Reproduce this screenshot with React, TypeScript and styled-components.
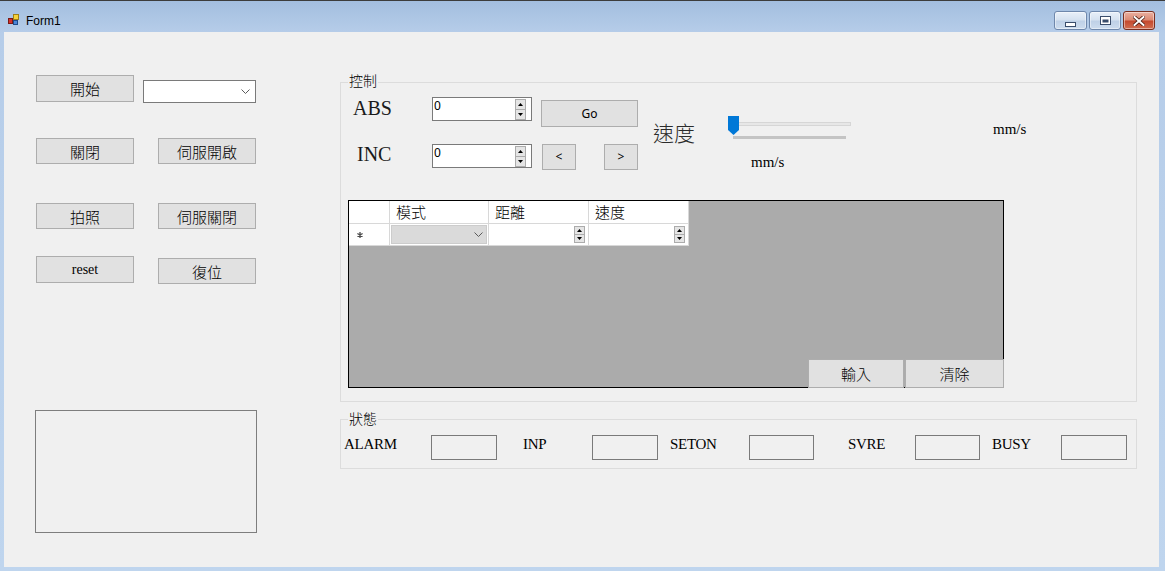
import React from "react";
import styled, { createGlobalStyle } from "styled-components";

const CJK = `"Noto Sans CJK TC", "Noto Sans CJK SC", sans-serif`;
const SERIF = `"Liberation Serif", "Noto Sans CJK TC", serif`;
const SANS = `"Noto Sans", "Liberation Sans", sans-serif`;

const GlobalStyle = createGlobalStyle`
  html, body { margin: 0; padding: 0; background: #bcd3ec; }
  body { width: 1165px; height: 571px; overflow: hidden; }
  *, *::before, *::after { box-sizing: border-box; }
`;

const Window = styled.div`
  width: 1165px;
  height: 571px;
  display: flex;
  flex-direction: column;
  background: linear-gradient(180deg, #a3bedf 0px, #b6cde9 32px, #bfd5ee 100%);
  border-top: 1px solid #3c3c3c;
  overflow: hidden;
`;

const TitleBar = styled.div`
  height: 31px;
  display: flex;
  align-items: flex-start;
  padding: 0 10px 0 8px;
`;

const AppIcon = styled.svg`
  margin-top: 12px;
  flex: none;
`;

const Caption = styled.div`
  margin: 12px 0 0 7px;
  font-family: "Segoe UI", "Liberation Sans", sans-serif;
  font-size: 12px;
  line-height: 16px;
  color: #000;
`;

const CaptionButtons = styled.div`
  margin: 10px 0 0 auto;
  display: flex;
  gap: 2px;
`;

const CaptionButton = styled.div<{ $close?: boolean; $w: number }>`
  width: ${(p) => p.$w}px;
  height: 19px;
  border-radius: 3px;
  border: 1px solid ${(p) => (p.$close ? "#7a2e1f" : "#6e87ab")};
  background: ${(p) =>
    p.$close
      ? "linear-gradient(180deg, #eab0a1 0%, #dc8b75 45%, #c54a2f 55%, #d06e52 100%)"
      : "linear-gradient(180deg, #e9f0f9 0%, #d6e2f0 45%, #bfd1e7 55%, #cddcee 100%)"};
  box-shadow: inset 0 0 0 1px rgba(255, 255, 255, 0.45);
  display: flex;
  align-items: center;
  justify-content: center;
`;

const Client = styled.div`
  margin: 0 6px 4px 4px;
  height: 535px;
  background: #f0f0f0;
  display: flex;
`;

const LeftPanel = styled.div`
  width: 253px;
  flex: none;
  padding: 43px 0 0 32px;
  display: flex;
  flex-direction: column;
`;

const ButtonRow = styled.div<{ $mt: number }>`
  display: flex;
  align-items: flex-start;
  margin-top: ${(p) => p.$mt}px;
`;

const WinButton = styled.button<{ $w: number; $h?: number; $ml?: number; $mt?: number; $kind?: "cjk" | "serif" | "sans" }>`
  width: ${(p) => p.$w}px;
  height: ${(p) => p.$h ?? 26}px;
  margin: ${(p) => p.$mt ?? 0}px 0 0 ${(p) => p.$ml ?? 0}px;
  padding: 0;
  flex: none;
  background: #e1e1e1;
  border: 1px solid #adadad;
  border-radius: 0;
  color: #000;
  font-family: ${(p) => (p.$kind === "serif" ? SERIF : p.$kind === "sans" ? SANS : CJK)};
  font-size: ${(p) => (p.$kind === "serif" ? "14px" : p.$kind === "sans" ? "12px" : "15px")};
  font-weight: ${(p) => (p.$kind === "serif" || p.$kind === "sans" ? 400 : 300)};
  line-height: 1;
  display: flex;
  align-items: center;
  justify-content: center;
`;

const Combo = styled.div<{ $w: number; $ml: number; $mt: number }>`
  width: ${(p) => p.$w}px;
  height: 23px;
  margin: ${(p) => p.$mt}px 0 0 ${(p) => p.$ml}px;
  background: #fff;
  border: 1px solid #7a7a7a;
  display: flex;
  align-items: center;
  justify-content: flex-end;
  padding-right: 5px;
`;

const PictureBox = styled.div`
  width: 222px;
  height: 123px;
  margin: 126px 0 0 -1px;
  border: 1px solid #7e7e7e;
`;

const RightPanel = styled.div`
  width: 797px;
  margin-left: 83px;
  padding-top: 50px;
  display: flex;
  flex-direction: column;
`;

const GroupBox = styled.div<{ $mt?: number }>`
  border: 1px solid #dcdcdc;
  margin-top: ${(p) => p.$mt ?? 0}px;
  display: flex;
  flex-direction: column;
`;

const Legend = styled.div<{ $mt: number }>`
  align-self: flex-start;
  margin: ${(p) => p.$mt}px 0 0 7px;
  padding: 0 1px;
  height: 16px;
  background: #f0f0f0;
  font-family: ${CJK};
  font-size: 14px;
  font-weight: 300;
  line-height: 16px;
  color: #000;
`;

const ControlBody = styled.div`
  display: flex;
  flex-direction: column;
  padding-bottom: 13px;
`;

const TopSection = styled.div`
  margin-top: 9px;
  display: grid;
  grid-template-columns: 91px 109px 112px 75px 265px auto;
  grid-template-rows: 47px 26px;
  align-items: start;
`;

const BigLabel = styled.div<{ $pl: number; $row: number; $lh: number }>`
  grid-column: 1;
  grid-row: ${(p) => p.$row};
  padding-left: ${(p) => p.$pl}px;
  font-family: ${SERIF};
  font-size: 20px;
  line-height: ${(p) => p.$lh}px;
  color: #1a1a1a;
`;

const Numeric = styled.div<{ $row: number }>`
  grid-column: 2;
  grid-row: ${(p) => p.$row};
  width: 100px;
  height: 24px;
  background: #fff;
  border: 1px solid #7a7a7a;
  display: flex;
  justify-content: space-between;
  padding: 0 5px 0 1px;
  font-family: ${SANS};
  font-size: 12px;
  line-height: 16px;
  color: #000;
`;

const SpinStack = styled.div<{ $h: number }>`
  display: flex;
  flex-direction: column;
  align-self: center;
  height: ${(p) => p.$h}px;
`;

const SpinButton = styled.div`
  flex: 1;
  width: 11px;
  background: #e5e5e5;
  border: 1px solid #acacac;
  display: flex;
  align-items: center;
  justify-content: center;
  & + & { border-top: none; }
`;

const CellA = styled.div<{ $row: number; $col: number; $mt?: number; $span?: number }>`
  grid-column: ${(p) => p.$col};
  grid-row: ${(p) => p.$row} / span ${(p) => p.$span ?? 1};
  margin-top: ${(p) => p.$mt ?? 0}px;
  display: flex;
  align-items: flex-start;
`;

const SpeedLabel = styled.div`
  font-family: ${CJK};
  font-size: 21px;
  font-weight: 300;
  line-height: 26px;
  color: #2b2b2b;
`;

const SmallSerif = styled.div<{ $pl?: number }>`
  padding-left: ${(p) => p.$pl ?? 0}px;
  font-family: ${SERIF};
  font-size: 15px;
  line-height: 18px;
  color: #000;
`;

const Slider = styled.div`
  position: relative;
  width: 124px;
  height: 24px;
  display: flex;
  flex-direction: column;
  padding-left: 5px;
`;

const SliderTrack = styled.div`
  margin-top: 6px;
  width: 118px;
  height: 4px;
  background: #e7e7e7;
  border: 1px solid #d6d6d6;
`;

const SliderTicks = styled.div`
  margin-top: 10px;
  width: 113px;
  height: 3px;
  background: #c4c4c4;
`;

const Thumb = styled.svg`
  position: absolute;
  left: 0;
  top: 0;
`;

const DataGrid = styled.div`
  position: relative;
  margin: 30px 0 0 7px;
  width: 656px;
  height: 188px;
  border: 1px solid #000;
  background: #ababab;
`;

const GridTable = styled.div`
  display: grid;
  grid-template-columns: 41px 99px 100px 100px;
  grid-template-rows: 23px 22px;
  width: max-content;
`;

const HeaderCell = styled.div`
  background: #fff;
  border-right: 1px solid #d8d8d8;
  border-bottom: 1px solid #d8d8d8;
  padding-left: 6px;
  font-family: ${CJK};
  font-size: 15px;
  font-weight: 300;
  line-height: 21px;
  color: #000;
`;

const RowHeaderCell = styled.div`
  background: #fff;
  border-right: 1px solid #d8d8d8;
  border-bottom: 1px solid #d8d8d8;
  display: flex;
  align-items: center;
  padding-left: 8px;
`;

const ComboCell = styled.div`
  background: #fff;
  border-right: 1px solid #d8d8d8;
  border-bottom: 1px solid #d8d8d8;
  padding: 1px;
  display: flex;
`;

const ComboCellInner = styled.div`
  flex: 1;
  background: #dadada;
  border: 1px solid #cccccc;
  display: flex;
  align-items: center;
  justify-content: flex-end;
  padding-right: 3px;
`;

const NumCell = styled.div`
  background: #fff;
  border-right: 1px solid #d8d8d8;
  border-bottom: 1px solid #d8d8d8;
  display: flex;
  justify-content: flex-end;
  align-items: center;
  padding-right: 3px;
`;

const GridButtons = styled.div`
  position: absolute;
  right: -1px;
  bottom: -1px;
  display: flex;
  gap: 1px;
`;

const StatusRow = styled.div`
  margin-top: 9px;
  padding: 0 0 8px 3px;
  display: flex;
  align-items: flex-start;
`;

const StatusLabel = styled.div<{ $w: number; $ml: number }>`
  width: ${(p) => p.$w}px;
  margin-left: ${(p) => p.$ml}px;
  flex: none;
  font-family: ${SERIF};
  font-size: 15px;
  letter-spacing: -0.3px;
  line-height: 18px;
  color: #000;
`;

const StatusBox = styled.div<{ $w: number }>`
  width: ${(p) => p.$w}px;
  height: 25px;
  flex: none;
  border: 1px solid #7a7a7a;
  background: #f0f0f0;
`;

const Chevron = () => (
  <svg width="9" height="5" viewBox="0 0 9 5">
    <polyline points="0.5,0.5 4.5,4.5 8.5,0.5" fill="none" stroke="#5a5a5a" strokeWidth="1" />
  </svg>
);

const Tri = ({ up }: { up?: boolean }) => (
  <svg width="5" height="3" viewBox="0 0 5 3">
    <polygon points={up ? "2.5,0 5,3 0,3" : "0,0 5,0 2.5,3"} fill="#000" />
  </svg>
);

const Spin = ({ h }: { h: number }) => (
  <SpinStack $h={h}>
    <SpinButton>
      <Tri up />
    </SpinButton>
    <SpinButton>
      <Tri />
    </SpinButton>
  </SpinStack>
);

const status = [
  { label: "ALARM", w: 87, ml: 0, box: 66 },
  { label: "INP", w: 69, ml: 26, box: 66 },
  { label: "SETON", w: 79, ml: 12, box: 65 },
  { label: "SVRE", w: 67, ml: 34, box: 65 },
  { label: "BUSY", w: 69, ml: 12, box: 66 },
];

export default function App() {
  return (
    <>
      <GlobalStyle />
      <Window>
        <TitleBar>
          <AppIcon width="11" height="13" viewBox="0 0 11 13">
            <rect x="0.5" y="5.5" width="4" height="5" fill="#d8302a" stroke="#7a1a14" />
            <rect x="5.5" y="1.5" width="5" height="5" fill="#f5d23c" stroke="#a08016" />
            <rect x="5.5" y="7.5" width="4" height="4" fill="#4a86d8" stroke="#1d4a8a" />
          </AppIcon>
          <Caption>Form1</Caption>
          <CaptionButtons>
            <CaptionButton $w={33}>
              <svg width="11" height="5" viewBox="0 0 11 5" style={{ marginTop: 8 }}>
                <rect x="0.5" y="0.5" width="10" height="4" fill="#fff" stroke="#3a4d6b" />
              </svg>
            </CaptionButton>
            <CaptionButton $w={32}>
              <svg width="11" height="9" viewBox="0 0 11 9">
                <rect x="0.5" y="0.5" width="10" height="8" fill="#fff" stroke="#3a4d6b" />
                <rect x="2.5" y="3.5" width="6" height="3" fill="#3a4d6b" />
              </svg>
            </CaptionButton>
            <CaptionButton $w={32} $close>
              <svg width="12" height="10" viewBox="0 0 12 10">
                <path d="M1.5,1 L10.5,9 M10.5,1 L1.5,9" stroke="#4a1a10" strokeWidth="3.6" strokeLinecap="square" />
                <path d="M1.5,1 L10.5,9 M10.5,1 L1.5,9" stroke="#fff" strokeWidth="2" strokeLinecap="square" />
              </svg>
            </CaptionButton>
          </CaptionButtons>
        </TitleBar>

        <Client>
          <LeftPanel>
            <ButtonRow $mt={0}>
              <WinButton $w={98} $h={27}>開始</WinButton>
              <Combo $w={113} $ml={9} $mt={5}>
                <Chevron />
              </Combo>
            </ButtonRow>
            <ButtonRow $mt={35}>
              <WinButton $w={98}>關閉</WinButton>
              <WinButton $w={98} $ml={24}>伺服開啟</WinButton>
            </ButtonRow>
            <ButtonRow $mt={39}>
              <WinButton $w={98}>拍照</WinButton>
              <WinButton $w={98} $ml={24}>伺服關閉</WinButton>
            </ButtonRow>
            <ButtonRow $mt={27}>
              <WinButton $w={98} $h={27} $kind="serif">reset</WinButton>
              <WinButton $w={98} $ml={24} $mt={2}>復位</WinButton>
            </ButtonRow>
            <PictureBox />
          </LeftPanel>

          <RightPanel>
            <GroupBox>
              <Legend $mt={-11}>控制</Legend>
              <ControlBody>
                <TopSection>
                  <BigLabel $row={1} $pl={12} $lh={23}>ABS</BigLabel>
                  <BigLabel $row={2} $pl={16} $lh={20}>INC</BigLabel>
                  <Numeric $row={1}>
                    <span>0</span>
                    <Spin h={21} />
                  </Numeric>
                  <Numeric $row={2}>
                    <span>0</span>
                    <Spin h={21} />
                  </Numeric>
                  <CellA $row={1} $col={3} $mt={3}>
                    <WinButton $w={97} $h={27} $kind="sans">Go</WinButton>
                  </CellA>
                  <CellA $row={2} $col={3}>
                    <WinButton $w={34} $ml={1} $kind="sans">&lt;</WinButton>
                    <WinButton $w={34} $ml={28} $kind="sans">&gt;</WinButton>
                  </CellA>
                  <CellA $row={1} $col={4} $span={2} $mt={22}>
                    <SpeedLabel>速度</SpeedLabel>
                  </CellA>
                  <CellA $row={1} $col={5} $mt={19}>
                    <Slider>
                      <SliderTrack />
                      <SliderTicks />
                      <Thumb width="11" height="19" viewBox="0 0 11 19">
                        <path d="M0,0 H11 V14 L5.5,19 L0,14 Z" fill="#0078d7" />
                      </Thumb>
                    </Slider>
                  </CellA>
                  <CellA $row={2} $col={5} $mt={9}>
                    <SmallSerif $pl={23}>mm/s</SmallSerif>
                  </CellA>
                  <CellA $row={1} $col={6} $mt={23}>
                    <SmallSerif>mm/s</SmallSerif>
                  </CellA>
                </TopSection>

                <DataGrid>
                  <GridTable>
                    <HeaderCell />
                    <HeaderCell>模式</HeaderCell>
                    <HeaderCell>距離</HeaderCell>
                    <HeaderCell>速度</HeaderCell>
                    <RowHeaderCell>
                      <svg width="6" height="6" viewBox="0 0 6 6">
                        <path d="M3,0 V6 M0.4,1.5 L5.6,4.5 M5.6,1.5 L0.4,4.5" stroke="#4a4a4a" strokeWidth="1.3" />
                      </svg>
                    </RowHeaderCell>
                    <ComboCell>
                      <ComboCellInner>
                        <Chevron />
                      </ComboCellInner>
                    </ComboCell>
                    <NumCell>
                      <Spin h={17} />
                    </NumCell>
                    <NumCell>
                      <Spin h={17} />
                    </NumCell>
                  </GridTable>
                  <GridButtons>
                    <WinButton $w={96} $h={29}>輸入</WinButton>
                    <WinButton $w={99} $h={29}>清除</WinButton>
                  </GridButtons>
                </DataGrid>
              </ControlBody>
            </GroupBox>

            <GroupBox $mt={17}>
              <Legend $mt={-10}>狀態</Legend>
              <StatusRow>
                {status.map((s) => (
                  <React.Fragment key={s.label}>
                    <StatusLabel $w={s.w} $ml={s.ml}>{s.label}</StatusLabel>
                    <StatusBox $w={s.box} />
                  </React.Fragment>
                ))}
              </StatusRow>
            </GroupBox>
          </RightPanel>
        </Client>
      </Window>
    </>
  );
}
